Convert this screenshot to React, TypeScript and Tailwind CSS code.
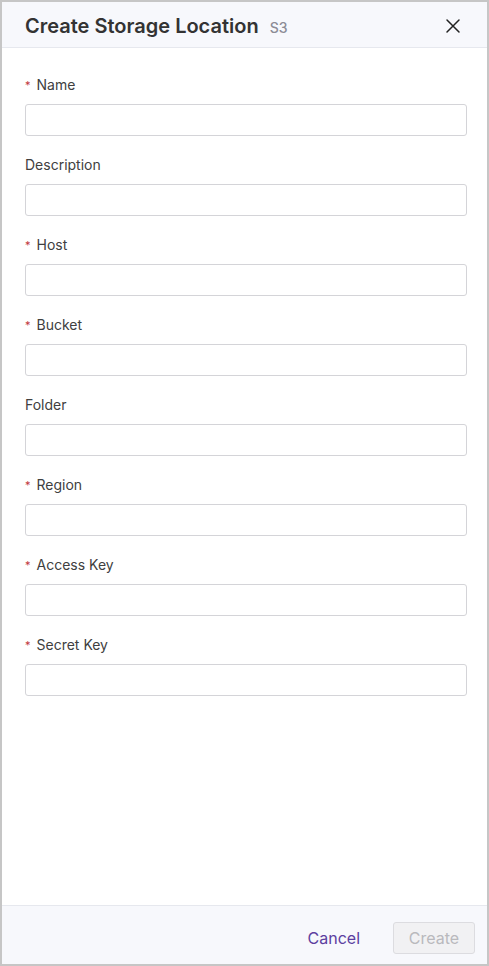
const FIELDS: { label: string; required?: boolean }[] = [
  { label: "Name", required: true },
  { label: "Description" },
  { label: "Host", required: true },
  { label: "Bucket", required: true },
  { label: "Folder" },
  { label: "Region", required: true },
  { label: "Access Key", required: true },
  { label: "Secret Key", required: true },
];

export default function App() {
  return (
    <div
      className="flex h-[966px] w-[489px] flex-col border-2 border-[#c6c6c6] bg-white"
      style={{ fontFamily: "Inter, 'Noto Sans', sans-serif" }}
    >
      <div className="flex h-[46px] shrink-0 items-center justify-between border-b border-[#e6e8ee] bg-[#f7f8fc] pl-[23px] pr-[22px] pt-[3px]">
        <div className="flex items-baseline gap-[11px]">
          <span className="text-[20px] font-semibold text-[#333]">Create Storage Location</span>
          <span className="text-[14px] font-medium text-[#8c8c96]">S3</span>
        </div>
        <button className="flex h-6 w-6 items-center justify-center text-[#222]">
          <svg width="16" height="16" viewBox="0 0 16 16" fill="none" stroke="currentColor" strokeWidth="1.5" strokeLinecap="round">
            <path d="M2 2 L14 14 M14 2 L2 14" />
          </svg>
        </button>
      </div>

      <div className="flex-1 px-[23px] pt-[26px]">
        {FIELDS.map(({ label, required }) => (
          <div key={label} className="mb-[18px]">
            <div className="mb-[10px] flex h-5 items-center text-[14px] text-[#404040]">
              {required && <span className="mr-[6px] mt-[3px] text-[11px] text-[#c0353c]">*</span>}
              {label}
            </div>
            <input className="block h-[32px] w-[442px] rounded-[3px] border border-[#d4d4d8] bg-white px-2 text-[14px] outline-none" />
          </div>
        ))}
      </div>

      <div className="flex h-[59px] shrink-0 items-center justify-end gap-[33px] border-t border-[#e6e8ee] bg-[#f7f8fc] pr-[12px] pt-[5px]">
        <button className="text-[16px] text-[#5c3fa0]">Cancel</button>
        <button
          disabled
          className="h-[32px] w-[82px] rounded-[3px] border border-[#dcdce0] bg-[#f1f1f3] text-[16px] text-[#b9b9bd]"
        >
          Create
        </button>
      </div>
    </div>
  );
}
